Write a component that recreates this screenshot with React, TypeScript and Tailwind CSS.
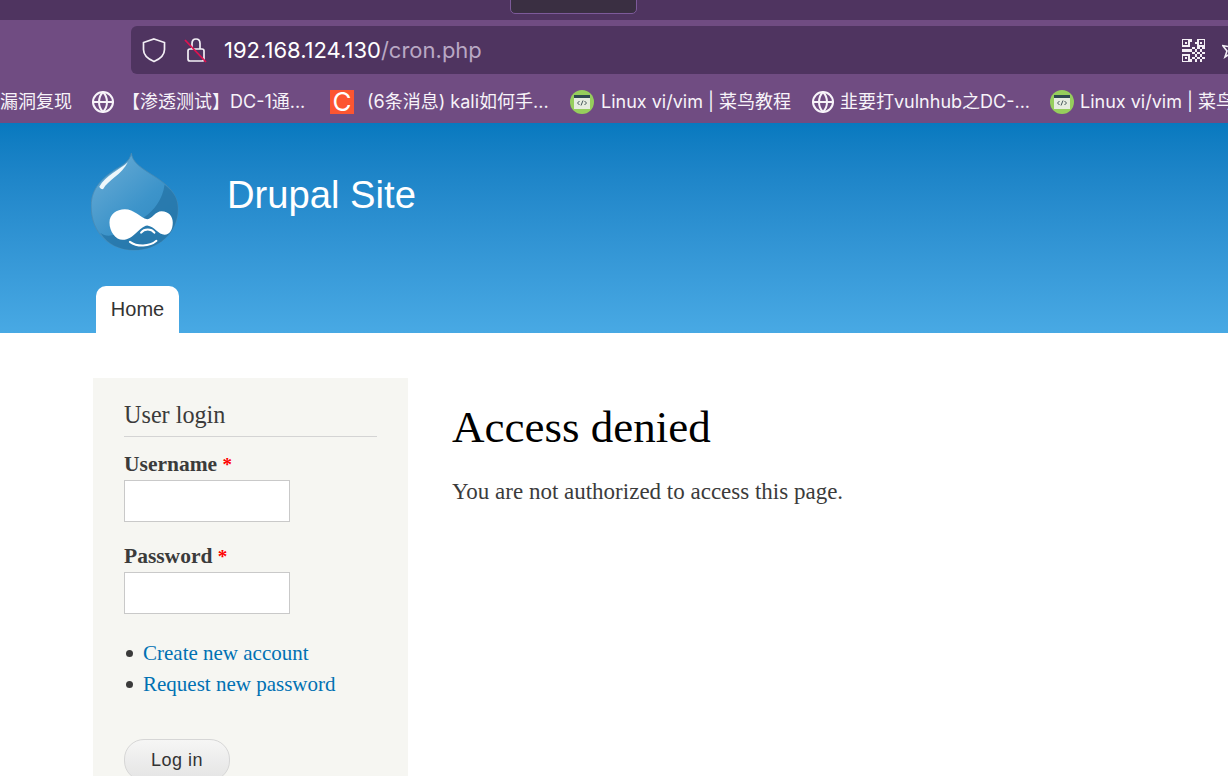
import { Globe } from "lucide-react";

const cjk = "font-['Inter','Noto_Sans_CJK_SC',sans-serif]";

// filled cells of the address bar's QR glyph, on a 9x9 grid
const qrCells = [
  [3, 0], [5, 1], [4, 3], [6, 3], [8, 3], [0, 4], [2, 4], [3, 4], [5, 4], [7, 4],
  [4, 5], [6, 5], [8, 5], [1, 4], [5, 6], [7, 6], [4, 7], [6, 7], [8, 7], [3, 8], [5, 8], [7, 8],
];

function QrIcon() {
  return (
    <svg width="23" height="23" viewBox="0 0 18 18" className="absolute left-[1182px] top-[39px]" fill="#f3eff5" shapeRendering="crispEdges">
      <path fillRule="evenodd" d="M0 0h6v6H0ZM1 1v4h4V1Z" />
      <path fillRule="evenodd" d="M12 0h6v6h-6ZM13 1v4h4V1Z" />
      <path fillRule="evenodd" d="M0 12h6v6H0ZM1 13v4h4v-4Z" />
      <rect x="2" y="2" width="2" height="2" />
      <rect x="14" y="2" width="2" height="2" />
      <rect x="2" y="14" width="2" height="2" />
      {qrCells.map(([x, y]) => (
        <rect key={`${x}-${y}`} x={x * 2} y={y * 2} width="2" height="2" />
      ))}
    </svg>
  );
}

function RunoobIcon() {
  return (
    <svg width="24" height="24" viewBox="0 0 24 24" className="shrink-0">
      <circle cx="12" cy="12" r="12" fill="#96ce5c" />
      <rect x="4" y="5" width="16" height="14" fill="#e6ecdf" />
      <rect x="4" y="5" width="16" height="3" fill="#2f4a50" />
      <path d="M9.500 11 7.500 13l2 2M14.500 11l2 2-2 2M13 10.500l-2 5" fill="none" stroke="#44565a" strokeWidth="1" />
    </svg>
  );
}

function DrupalLogo() {
  return (
    <svg width="88" height="98" viewBox="0 0 86 96">
      <defs>
        <linearGradient id="drop" x1="0" y1="0" x2="0.8" y2="1">
          <stop offset="0" stopColor="#6eaed6" />
          <stop offset="0.6" stopColor="#3d94ca" />
          <stop offset="1" stopColor="#2f88c0" />
        </linearGradient>
      </defs>
      <path d="M39.500 0C40 8 47 13 56 19C72 29 85 38 85 55C85 79 65 95 42 95C18 95 0 78 0 52C0 34 12 24 24 16C31 12 38 8 39.500 0Z" fill="url(#drop)" stroke="#4a8ab3" strokeWidth="0.800" />
      <path d="M72 31C82 39 85 45 85 55C85 79 65 95 42 95C28 95 16 89 9 78C20 88 42 70 52 63C62 56 70 45 72 31Z" fill="#2473a6" opacity="0.75" />
      <path d="M36 9C28 16 14 22 8 33C9 35 11 36 12 35C16 27 30 21 36 9Z" fill="#eef7fb" />
      <path d="M18 68C18 60 25 55 33 55C42 55 48 63 55 65C60 64 63 57 69 57C76 57 80 62 80 68C80 75 77 80 72 80C66 80 62 72 55 71C47 72 42 85 31 85C24 85 18 77 18 68Z" fill="#fff" />
      <path d="M38 87C45 92 57 92 64 86M49 78C52 74 59 74 62 78" fill="none" stroke="#fff" strokeWidth="2" strokeLinecap="round" />
    </svg>
  );
}

function Bookmark({ icon, label, width, gap }: { icon: React.ReactNode; label: string; width: string; gap: string }) {
  return (
    <div className={`flex items-center shrink-0 ${width} ${gap}`}>
      {icon}
      <span className="whitespace-nowrap">{label}</span>
    </div>
  );
}

function Field({ label }: { label: string }) {
  return (
    <div>
      <label className="block font-bold text-[#3b3b3b] leading-[22px] text-[21.5px]">
        {label} <span className="text-[#f00] text-[19px]">*</span>
      </label>
      <div className="mt-[4px] w-[166px] h-[42px] bg-white border border-[#c9c9c9]" />
    </div>
  );
}

export default function App() {
  return (
    <div className="relative w-[1228px] h-[776px] overflow-hidden bg-white font-['Liberation_Serif',serif]">
      {/* browser chrome */}
      <div className="relative h-[20px] bg-[#4f3460]">
        <div className="absolute left-[510px] top-[-6px] w-[127px] h-[20px] rounded-[5px] bg-[#3a2f42] border border-[#7d5a9a]" />
      </div>
      <div className={`h-[54px] bg-[#704c82] pl-[131px] pt-[6px] ${cjk}`}>
        <div className="h-[48px] bg-[#4f3460] rounded-l-[6px] flex items-center pl-[11px]">
          <svg width="24" height="26" viewBox="0 0 24 26" fill="none" stroke="#f3eff5" strokeWidth="1.700">
            <path d="M12 2 22.500 5.500V12.500C22.500 18 18 22 12 24.500C6 22 1.500 18 1.500 12.500V5.500Z" />
          </svg>
          <svg width="24" height="26" viewBox="0 0 24 26" fill="none" className="ml-[18px]">
            <rect x="4" y="12" width="16" height="12" rx="2" stroke="#f3eff5" strokeWidth="1.700" />
            <path d="M8 12V6.500C8 3.500 9.500 2 12 2C14.500 2 16 3.500 16 6.500V12" stroke="#f3eff5" strokeWidth="1.700" />
            <path d="M1 3 22 25" stroke="#e0124f" strokeWidth="1.800" />
          </svg>
          <div className="ml-[16px] text-[22px] leading-none text-white">
            192.168.124.130<span className="text-[#b9a8c4]">/cron.php</span>
          </div>
          <QrIcon />
          <svg width="6" height="20" viewBox="0 0 6 20" className="absolute left-[1222px] top-[42px]" fill="none" stroke="#f3eff5" strokeWidth="1.600">
            <path d="M0 3.500 6 4.500M1 4 5 9 3 15 6 13" />
          </svg>
        </div>
      </div>
      <div className={`h-[49px] pt-[6px] bg-[#704c82] flex items-center text-[18px] leading-none text-[#f7f3f9] overflow-hidden ${cjk}`}>
        <span className="w-[91px] shrink-0 whitespace-nowrap">漏洞复现</span>
        <Bookmark width="w-[239px]" gap="gap-[7px]" icon={<Globe size={24} strokeWidth={2} className="shrink-0" />} label="【渗透测试】DC-1通..." />
        <Bookmark width="w-[240px]" gap="gap-[13px]" icon={<div className="w-[24px] h-[24px] bg-[#fc5531] text-white flex items-center justify-center text-[26px] shrink-0">C</div>} label="(6条消息) kali如何手..." />
        <Bookmark width="w-[241px]" gap="gap-[7px]" icon={<RunoobIcon />} label="Linux vi/vim | 菜鸟教程" />
        <Bookmark width="w-[239px]" gap="gap-[5px]" icon={<Globe size={24} strokeWidth={2} className="shrink-0" />} label="韭要打vulnhub之DC-..." />
        <Bookmark width="w-[241px]" gap="gap-[6px]" icon={<RunoobIcon />} label="Linux vi/vim | 菜鸟教程" />
      </div>

      {/* site header */}
      <header className="h-[210px] bg-gradient-to-b from-[#0779bf] to-[#48a9e4] pl-[91px] flex flex-col font-['Liberation_Sans',sans-serif]">
        <div className="flex h-[163px] pt-[30px]">
          <DrupalLogo />
          <div className="ml-[48px] mt-[20px] text-[38.200px] leading-[44px] text-white">Drupal Site</div>
        </div>
        <nav className="ml-[5px] w-[83px] h-[47px] pb-[2px] bg-white rounded-t-[10px] flex items-center justify-center text-[20px] text-[#333]">
          Home
        </nav>
      </header>

      {/* content */}
      <div className="flex pl-[93px] pt-[45px]">
        <aside className="w-[315px] h-[500px] bg-[#f6f6f2] px-[31px] pt-[23px] shrink-0">
          <h2 className="text-[24.200px] leading-[28px] text-[#3b3b3b] pb-[7px] border-b border-[#d4d4d4] w-[253px]">User login</h2>
          <div className="mt-[16px] flex flex-col gap-[23px]">
            <Field label="Username" />
            <Field label="Password" />
          </div>
          <ul className="mt-[24px] text-[21px] leading-[31px] text-[#0071b3]">
            <li className="flex items-center">
              <span className="w-[7px] h-[7px] rounded-full bg-[#3b3b3b] ml-[2px] mr-[10px]" />
              Create new account
            </li>
            <li className="flex items-center">
              <span className="w-[7px] h-[7px] rounded-full bg-[#3b3b3b] ml-[2px] mr-[10px]" />
              Request new password
            </li>
          </ul>
          <button className="mt-[39px] w-[106px] h-[42px] rounded-[20px] border border-[#d6d6d6] bg-gradient-to-b from-[#f6f6f5] to-[#e4e4e4] text-[#333] text-[18px] tracking-[0.5px] font-['Liberation_Sans',sans-serif]">
            Log in
          </button>
        </aside>
        <main className="ml-[44px] pt-[23px]">
          <h1 className="text-[45px] leading-[52px] text-black">Access denied</h1>
          <p className="mt-[24px] text-[23px] leading-[30px] text-[#3b3b3b]">You are not authorized to access this page.</p>
        </main>
      </div>
    </div>
  );
}
